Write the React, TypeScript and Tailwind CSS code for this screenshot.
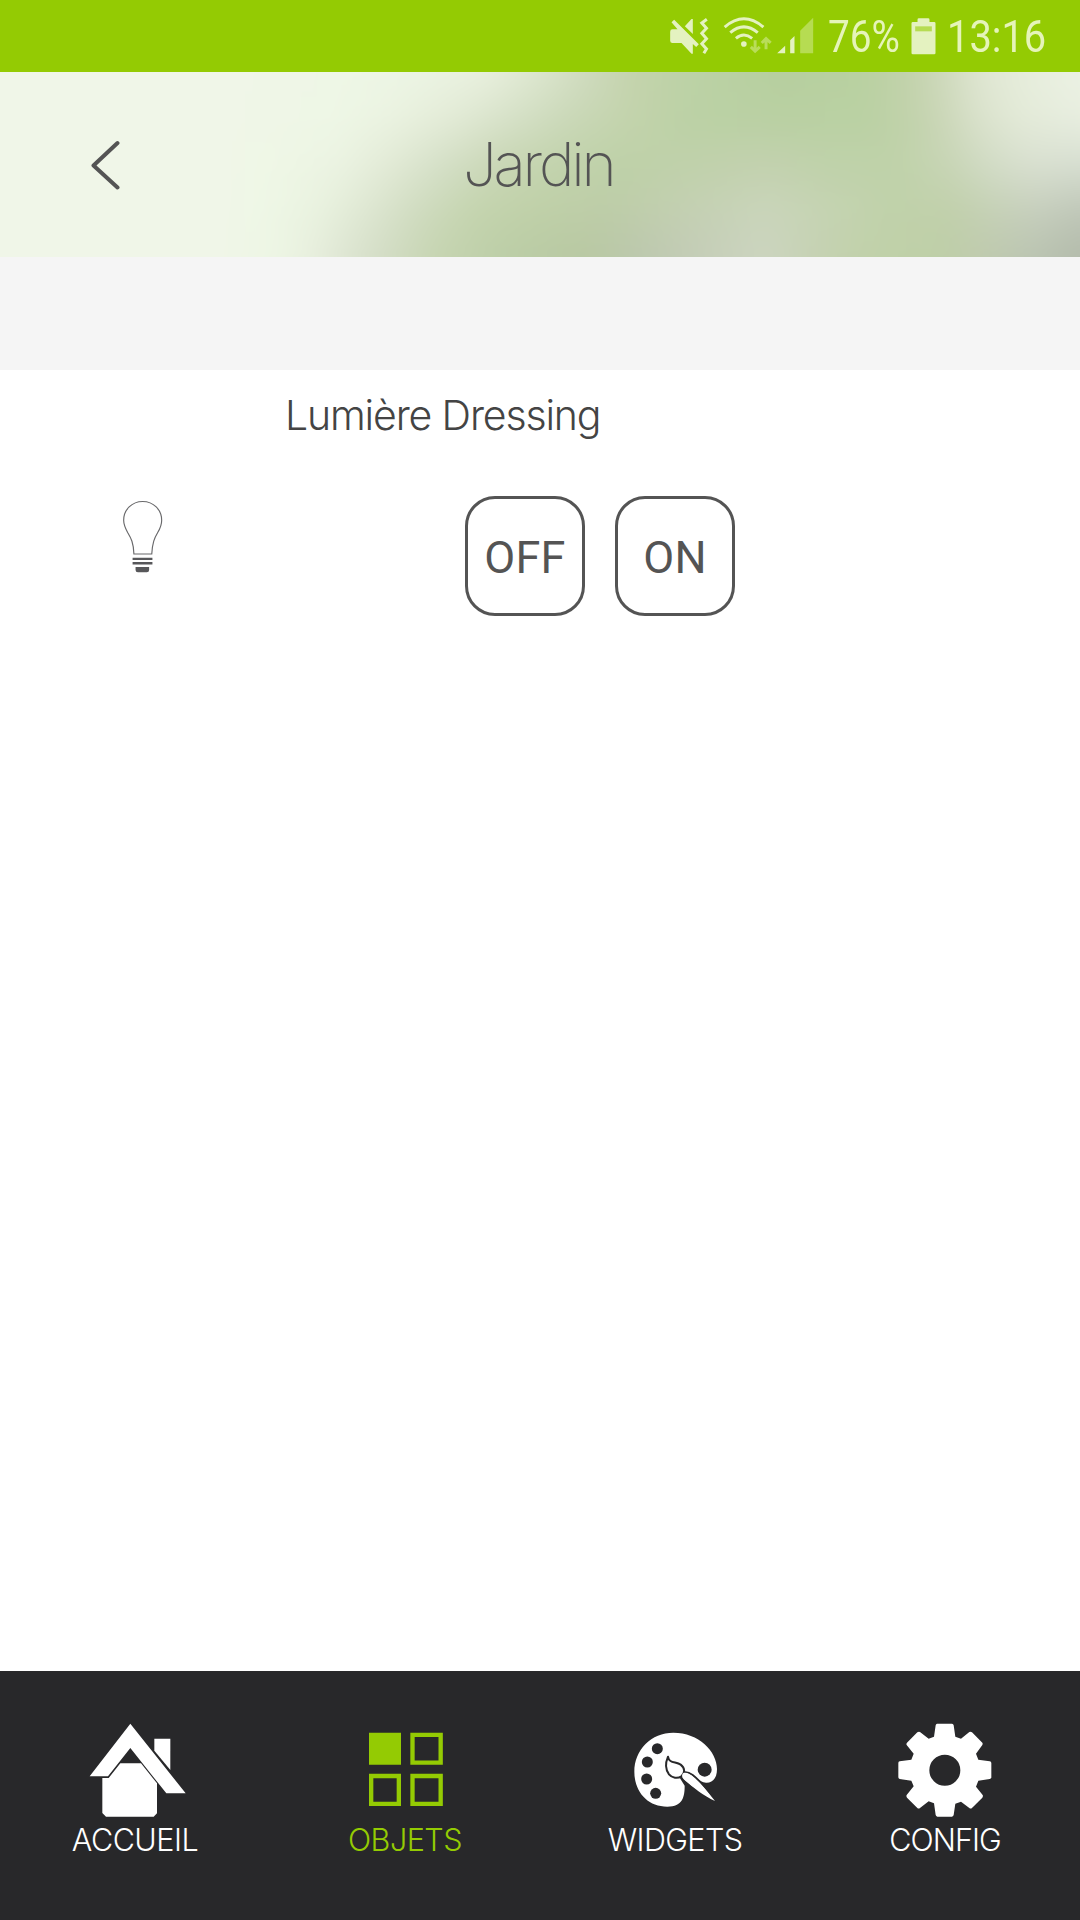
import type { ReactNode } from 'react'

type Stop = [number, string]

// colour samples of the garden backdrop, one list per horizontal band
const bands: { y: number; stops: Stop[] }[] = [
  { y: 0, stops: [[220, '#f0f6e8'], [290, '#eff6e7'], [345, '#eef7e6'], [415, '#ecf5e4'], [485, '#e9f0de'], [540, '#dce6ce'], [590, '#cedabd'], [635, '#c4d3ac'], [690, '#bcd2a6'], [785, '#b6cf9e'], [865, '#b9d1a1'], [910, '#c3d2ac'], [945, '#cfdabd'], [980, '#dfe6d2'], [1020, '#e6eddb'], [1080, '#ecf2e4']] },
  { y: 46, stops: [[220, '#f0f6e8'], [270, '#eff6e7'], [330, '#eef7e6'], [390, '#ebf3e1'], [450, '#e3ebd7'], [510, '#d6e1c8'], [570, '#cad8b8'], [630, '#c3d3ac'], [690, '#bbd1a5'], [785, '#b9d0a2'], [865, '#bad1a3'], [910, '#c1d2ab'], [945, '#ccd7b9'], [980, '#dae2cc'], [1020, '#e3ead8'], [1080, '#e8eee0']] },
  { y: 92, stops: [[220, '#f0f6e8'], [270, '#eff7e6'], [340, '#ebf3e2'], [390, '#e2ead6'], [440, '#d5e0c8'], [500, '#c9d6b5'], [560, '#c2d3ac'], [620, '#bed1a8'], [690, '#c0d1ab'], [765, '#c3d1af'], [830, '#bfd2aa'], [895, '#bfd2a9'], [950, '#c8d5b6'], [990, '#d2dcc6'], [1030, '#d9e0d0'], [1080, '#d7dfd1']] },
  { y: 139, stops: [[220, '#f0f6e8'], [265, '#eef7e6'], [320, '#e9f2df'], [370, '#dde6d1'], [420, '#cfdbbf'], [475, '#c4d4ae'], [540, '#bfd0a8'], [610, '#bdcca8'], [690, '#c4d0b3'], [765, '#cad5bb'], [830, '#c5d3b2'], [890, '#c0d2aa'], [950, '#c1d0ab'], [1000, '#c6d1b8'], [1040, '#c6cebd'], [1080, '#bfc7b8']] },
  { y: 185, stops: [[220, '#f0f6e8'], [275, '#edf6e4'], [310, '#e8efde'], [345, '#dde5d2'], [385, '#d2dcc4'], [440, '#c5d4b0'], [510, '#bbcda6'], [585, '#b8c8a2'], [640, '#bcc8ae'], [700, '#c5cdb8'], [765, '#ccd5c0'], [812, '#c6d2b4'], [860, '#c1d1aa'], [935, '#becfa7'], [985, '#bfcaae'], [1030, '#bbc5b2'], [1080, '#b3bbab']] },
]

const tabs = [
  { label: 'ACCUEIL', tracking: 'tracking-[-0.5px]', icon: <HomeIcon /> },
  { label: 'OBJETS', tracking: 'tracking-[-0.5px]', icon: <GridIcon />, active: true },
  { label: 'WIDGETS', tracking: 'tracking-[-0.6px]', icon: <PaletteIcon /> },
  { label: 'CONFIG', tracking: 'tracking-[-0.9px]', icon: <GearIcon /> },
]

export default function App() {
  return (
    <div className="flex h-[1920px] w-[1080px] flex-col overflow-hidden bg-white">
      <StatusBar />
      <header className="relative h-[185px] shrink-0">
        <Backdrop />
        <div className="relative flex h-full items-center">
          <button className="ml-[90px] flex h-[50px] w-[32px] items-center">
            <svg viewBox="0 0 32 50" className="h-[50px] w-[32px]" fill="none" stroke="#545454" strokeWidth="4" strokeLinecap="round" strokeLinejoin="round">
              <path d="M27.500 3 L3.500 25.500 L27.500 47.500" />
            </svg>
          </button>
          <h1 className="ml-[341px] -mt-[2px] font-['Inter'] text-[60px] leading-[70px] font-extralight tracking-[-3.200px] text-[#545454]">Jardin</h1>
        </div>
      </header>
      <div className="h-[113px] shrink-0 bg-[#f5f5f5]" />
      <main className="flex-1">
        <DeviceRow name="Lumière Dressing" />
      </main>
      <nav className="flex h-[249px] shrink-0 bg-[#28282a]">
        {tabs.map(tab => (
          <Tab key={tab.label} {...tab} />
        ))}
      </nav>
    </div>
  )
}

function StatusBar() {
  return (
    <div className="flex h-[72px] shrink-0 items-start bg-[#94cb03] pl-[670px] font-['Roboto'] text-[45px] leading-[74px] text-[#e5f4b9]">
      <svg viewBox="60 50 116 114" className="mt-[16.500px] h-[38px] w-[39px] shrink-0" fill="#e4f2c0">
        <path d="M60 94 Q60 87 67 87 H82 L64 66 L72 58 L146 132 L138 140 L128 131 V160 H124 L94 128 H67 Q60 128 60 121 Z" />
        <path d="M104 78 L124 56 H128 V101 Z" />
        <path d="M170 57 L155 68 L169 84 L155 99 L169 115 L155 130 L169 146 L161 159" fill="none" stroke="#e4f2c0" strokeWidth="9" />
      </svg>
      <svg viewBox="220 50 148 114" className="ml-[14px] mt-[16.500px] h-[38px] w-[49px] shrink-0" fill="none" stroke="#e4f2c0" strokeWidth="9">
        <path d="M225 80 Q283 30 342 80" />
        <path d="M242 97 Q283 62 325 97" />
        <path d="M259 114 Q283 94 308 114" />
        <circle cx="283" cy="131" r="8.500" fill="#e4f2c0" stroke="none" />
        <g stroke="#b9dd59" strokeWidth="9">
          <path d="M317 120 V153 M304 140 L317 153 L331 140" />
          <path d="M350 147 V115 M337 128 L350 115 L364 128" />
        </g>
      </svg>
      <svg viewBox="384 50 110 114" className="ml-[5px] mt-[16.500px] h-[38px] w-[37px] shrink-0">
        <path d="M384 159 L408 136 V159 Z M423 120 L436 107 V159 H423 Z" fill="#e4f2c0" />
        <path d="M453 91 L492 52 V159 H453 Z" fill="#b6dc52" />
      </svg>
      <span className="ml-[14px] w-[73px] origin-left scale-x-[0.86] whitespace-nowrap">76%</span>
      <svg viewBox="785 50 74 114" className="ml-[10px] mt-[16.500px] h-[38px] w-[25px] shrink-0">
        <path d="M790 65 H804 V58 Q804 54 808 54 H836 Q840 54 840 58 V65 H854 Q858 65 858 69 V158 Q858 162 854 162 H790 Q786 162 786 158 V69 Q786 65 790 65 Z" fill="#e4f2c0" />
        <path d="M797 78 H847 V93 H797 Z" fill="#b6dc52" />
      </svg>
      <span className="ml-[11px] origin-left scale-x-[0.885] whitespace-nowrap">13:16</span>
    </div>
  )
}

function Backdrop() {
  return (
    <svg viewBox="0 0 1080 185" className="absolute inset-0 h-full w-full">
      <defs>
        <filter id="soften" filterUnits="userSpaceOnUse" x="-60" y="-60" width="1200" height="305" colorInterpolationFilters="sRGB">
          <feGaussianBlur stdDeviation="13" />
        </filter>
        {bands.map((band, i) => (
          <linearGradient key={band.y} id={`band${i}`} gradientUnits="userSpaceOnUse" x1="0" y1="0" x2="1080" y2="0">
            {band.stops.map(([x, color]) => (
              <stop key={x} offset={x / 1080} stopColor={color} />
            ))}
          </linearGradient>
        ))}
        {bands.slice(1).map((band, i) => (
          <linearGradient key={band.y} id={`fade${i + 1}`} gradientUnits="userSpaceOnUse" x1="0" y1={bands[i].y} x2="0" y2={band.y}>
            <stop offset="0" stopColor="#fff" stopOpacity="0" />
            <stop offset="1" stopColor="#fff" />
          </linearGradient>
        ))}
        {bands.slice(1).map((band, i) => (
          <mask key={band.y} id={`mask${i + 1}`} maskUnits="userSpaceOnUse" x="-60" y="-60" width="1200" height="305">
            <rect x="-60" y="-60" width="1200" height="305" fill={`url(#fade${i + 1})`} />
          </mask>
        ))}
      </defs>
      <g filter="url(#soften)">
        {bands.map((band, i) => (
          <rect key={band.y} x="-60" y="-60" width="1200" height="305" fill={`url(#band${i})`} mask={i ? `url(#mask${i})` : undefined} />
        ))}
      </g>
    </svg>
  )
}

function DeviceRow({ name }: { name: string }) {
  return (
    <div className="flex">
      <div className="w-[285px] shrink-0 pt-[130px] pl-[123px]">
        <svg viewBox="68 60 121 220" className="h-[73px] w-[40px]">
          <path d="M101 223 C100 188 92 175 82 158 C75 145 70 135 70 121 C70 89 95 64 127.500 64 C160 64 185 89 185 121 C185 135 181 145 173 158 C163 175 157 188 155 223 Z" fill="none" stroke="#69696b" strokeWidth="3.500" />
          <path d="M97 234 H157 V241 H97 Z M97 247 H157 V255 H97 Z M106 262 H147 V271 Q147 278 140 278 H113 Q106 278 106 271 Z" fill="#57575a" />
        </svg>
      </div>
      <div className="pt-[20px]">
        <h2 className="font-['Inter'] text-[41px] leading-[50px] font-light tracking-[-1.150px] text-[#444444]">{name}</h2>
        <div className="mt-[56px] ml-[180px] flex gap-[30px]">
          <SwitchButton>OFF</SwitchButton>
          <SwitchButton>ON</SwitchButton>
        </div>
      </div>
    </div>
  )
}

function SwitchButton({ children }: { children: ReactNode }) {
  return (
    <button className="flex h-[120px] w-[120px] items-center justify-center rounded-[30px] border-3 border-[#545454] pt-[3px] font-['Roboto'] text-[45px] leading-none font-[450] tracking-[0.300px] text-[#545454]">
      {children}
    </button>
  )
}

function Tab({ label, tracking, icon, active }: { label: string; tracking: string; icon: ReactNode; active?: boolean }) {
  return (
    <button className={`flex w-[270px] shrink-0 flex-col items-center pt-[50px] ${active ? 'text-[#94cb03]' : 'text-white'}`}>
      {icon}
      <span className={`mt-[1px] font-['Inter'] text-[30.500px] leading-[36px] font-light ${tracking}`}>{label}</span>
    </button>
  )
}

function HomeIcon() {
  return (
    <svg viewBox="75 181 300 300" className="h-[100px] w-[100px] overflow-visible" fill="currentColor">
      <path d="M211 189 L377 398 H319 L211 262 L144 347 H89 Z" />
      <path d="M283 234 H331 V328 L283 270 Z" />
      <path d="M127 352 H146 L181 308 H243 L291 368 V458 L281 468 H138 L127 457 Z" />
    </svg>
  )
}

function GridIcon() {
  return (
    <svg viewBox="75 64 300 300" className="h-[100px] w-[100px]" fill="none" stroke="currentColor" strokeWidth="13">
      <path d="M117 99 H213 V195 H117 Z" fill="currentColor" stroke="none" />
      <path d="M247.500 105.500 H332 V189 H247.500 Z M123.500 229 H206.500 V312.500 H123.500 Z M247.500 229 H332 V312.500 H247.500 Z" />
    </svg>
  )
}

function PaletteIcon() {
  return (
    <svg viewBox="105 64 300 300" className="h-[100px] w-[100px]" fill="currentColor">
      <path d="M250 99 C326 99 381 155 381 208 C381 238 366 250 348 249 C330 249 320 232 300 220 L270 236 L284 258 C284 292 278 320 232 321 C172 321 133 276 133 216 C133 150 184 99 250 99 Z" />
      <g fill="#28282a">
        <circle cx="202" cy="147" r="16.500" />
        <circle cx="172" cy="187" r="16.500" />
        <circle cx="170" cy="238" r="16.500" />
        <circle cx="197" cy="281" r="16.500" />
        <circle cx="344" cy="210" r="21" />
      </g>
      <path d="M275 222 C282 216 295 217 308 226 C333 246 356 276 376 304 C344 287 308 265 286 247 C274 238 270 230 275 222 Z" stroke="#28282a" strokeWidth="6" />
      <path d="M234 171 C237 192 258 185 272 195 C285 205 286 220 274 230 C263 238 246 235 237 224 C224 207 226 190 234 171 Z" stroke="#28282a" strokeWidth="6" strokeLinejoin="round" />
      <path d="M284 240 C275 232 274 226 280 220 C290 217 301 223 309 231 C334 251 356 280 375 304 C341 288 307 262 284 240 Z" />
    </svg>
  )
}

function GearIcon() {
  return (
    <svg viewBox="74 64 300 300" className="h-[100px] w-[100px]" fill="currentColor">
      <path fillRule="evenodd" d="M200 72 H245 Q249 73 250 77 L255 111 L272 117 L297 97 Q301 95 305 98 L336 129 Q338 132 336 136 L317 162 L324 180 L358 185 Q363 186 363 190 V234 Q362 237 358 238 L324 243 L317 261 L337 286 Q339 290 336 294 L305 325 Q301 328 297 325 L272 306 L255 312 L250 346 Q249 350 245 351 H201 Q197 350 196 346 L191 311 L175 305 L149 325 Q145 328 141 325 L110 294 Q107 290 109 286 L130 260 L123 243 L88 238 Q84 237 84 233 V190 Q84 186 88 185 L123 180 L130 162 L109 136 Q107 132 110 129 L141 98 Q145 95 149 97 L175 117 L191 111 L196 77 Q197 73 200 72 Z M223.500 165 A46.500 46.500 0 1 0 223.500 258 A46.500 46.500 0 1 0 223.500 165 Z" />
    </svg>
  )
}
